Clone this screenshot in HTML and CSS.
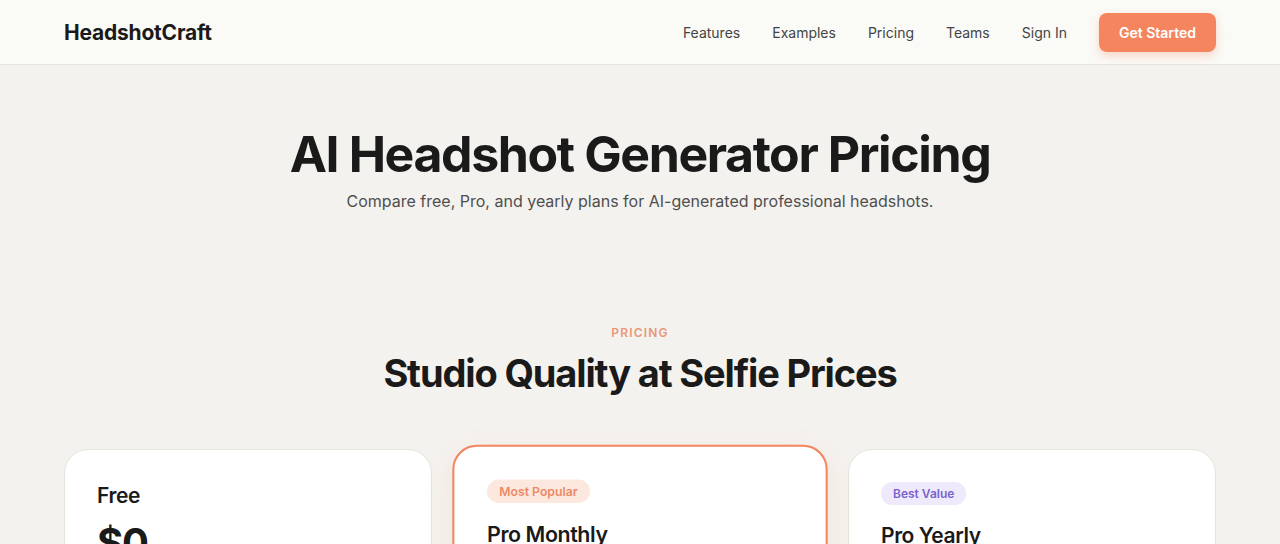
FILE: index.html
```html
<!DOCTYPE html>
<html lang="en">

<head>
    <meta charset="UTF-8">
    <meta name="viewport" content="width=device-width, initial-scale=1.0">
    <title>AI Headshot Generator Pricing - HeadshotCraft</title>
    <link rel="stylesheet" href="styles.css">
</head>

<body>
    <header class="site-header">
        <div class="container nav">
            <a class="logo" href="#">HeadshotCraft</a>
            <nav class="nav-links">
                <a href="#">Features</a>
                <a href="#">Examples</a>
                <a href="#">Pricing</a>
                <a href="#">Teams</a>
                <a href="#">Sign In</a>
                <a class="btn-primary" href="#">Get Started</a>
            </nav>
        </div>
    </header>

    <main>
        <section class="hero">
            <h1>AI Headshot Generator Pricing</h1>
            <p>Compare free, Pro, and yearly plans for AI-generated professional headshots.</p>
        </section>

        <section class="pricing container">
            <div class="section-label">Pricing</div>
            <h2>Studio Quality at Selfie Prices</h2>

            <div class="plans">
                <div class="plan">
                    <h3>Free</h3>
                    <div class="price">$0</div>
                    <p class="plan-note">Try it out with a few sample headshots.</p>
                    <ul>
                        <li>3 AI headshots</li>
                        <li>Standard resolution</li>
                        <li>2 background styles</li>
                    </ul>
                    <a class="plan-btn" href="#">Start Free</a>
                </div>

                <div class="plan featured">
                    <span class="badge badge-popular">Most Popular</span>
                    <h3>Pro Monthly</h3>
                    <div class="price">$19<span>/month</span></div>
                    <p class="plan-note">Everything you need for a polished profile.</p>
                    <ul>
                        <li>100 AI headshots</li>
                        <li>High resolution downloads</li>
                        <li>All background styles</li>
                    </ul>
                    <a class="plan-btn plan-btn-primary" href="#">Go Pro</a>
                </div>

                <div class="plan">
                    <span class="badge badge-value">Best Value</span>
                    <h3>Pro Yearly</h3>
                    <div class="price">$149<span>/year</span></div>
                    <p class="plan-note">Save over 30% with annual billing.</p>
                    <ul>
                        <li>Unlimited AI headshots</li>
                        <li>High resolution downloads</li>
                        <li>Priority processing</li>
                    </ul>
                    <a class="plan-btn" href="#">Choose Yearly</a>
                </div>
            </div>
        </section>
    </main>
</body>

</html>
```

FILE: styles.css
```css
/* General Reset */
* {
    margin: 0;
    padding: 0;
    box-sizing: border-box;
}

:root {
    --accent: #f4855f;
    --accent-soft: #fde8df;
    --purple: #7b62cf;
    --purple-soft: #efeafb;
    --bg: #f4f2ee;
    --header-bg: #fafaf6;
    --text: #1a1a1a;
    --muted: #4f4f4f;
    --border: #e6e3dd;
    --heading-font: "Inter", "Lato", sans-serif;
}

body {
    font-family: "Inter", "Liberation Sans", sans-serif;
    background-color: var(--bg);
    color: var(--text);
}

a {
    text-decoration: none;
    color: inherit;
}

.container {
    max-width: 1152px;
    margin: 0 auto;
}

/* Header */
.site-header {
    background-color: var(--header-bg);
    border-bottom: 1px solid var(--border);
}

.nav {
    height: 64px;
    display: flex;
    align-items: center;
    justify-content: space-between;
}

.logo {
    font-family: var(--heading-font);
    font-weight: 700;
    font-size: 21px;
    letter-spacing: -0.01em;
}

.nav-links {
    display: flex;
    align-items: center;
    gap: 32px;
    font-size: 14px;
    color: #444;
}

.btn-primary {
    background-color: var(--accent);
    color: #fff;
    font-weight: 600;
    padding: 11px 20px;
    border-radius: 8px;
    box-shadow: 0 4px 10px rgba(244, 133, 95, 0.3);
}

/* Hero */
.hero {
    text-align: center;
    padding: 59px 0 0;
}

.hero h1 {
    font-family: var(--heading-font);
    font-size: 50px;
    font-weight: 700;
    letter-spacing: -0.028em;
    line-height: 1.2;
}

.hero p {
    margin-top: 7px;
    font-size: 16px;
    color: var(--muted);
}

/* Pricing */
.pricing {
    padding-top: 114px;
    text-align: center;
}

.section-label {
    font-size: 12px;
    font-weight: 600;
    letter-spacing: 0.1em;
    text-transform: uppercase;
    color: #e9967a;
}

.pricing h2 {
    margin-top: 11px;
    font-family: var(--heading-font);
    font-size: 38px;
    font-weight: 700;
    letter-spacing: -0.03em;
    line-height: 1.2;
}

.plans {
    display: grid;
    grid-template-columns: repeat(3, 1fr);
    gap: 24px;
    margin-top: 52px;
    text-align: left;
}

.plan {
    background-color: #fff;
    border: 1px solid var(--border);
    border-radius: 24px;
    padding: 32px;
    display: flex;
    flex-direction: column;
    align-items: flex-start;
}

.plan.featured {
    border: 2px solid var(--accent);
    transform: scale(1.02);
    box-shadow: 0 10px 30px rgba(244, 133, 95, 0.12);
}

.badge {
    font-size: 12px;
    font-weight: 600;
    padding: 4px 12px;
    border-radius: 999px;
    margin-bottom: 17px;
}

.badge-popular {
    background-color: var(--accent-soft);
    color: #ec8a66;
}

.badge-value {
    background-color: var(--purple-soft);
    color: var(--purple);
}

.plan h3 {
    font-family: var(--heading-font);
    font-size: 21px;
    font-weight: 600;
    letter-spacing: -0.02em;
    line-height: 28px;
}

.price {
    margin-top: 8px;
    font-family: var(--heading-font);
    font-size: 40px;
    font-weight: 700;
    letter-spacing: -0.03em;
}

.price span {
    font-size: 16px;
    font-weight: 500;
    color: var(--muted);
    letter-spacing: 0;
}

.plan-note {
    margin-top: 8px;
    font-size: 15px;
    color: var(--muted);
}

.plan ul {
    list-style: none;
    margin: 24px 0;
    font-size: 15px;
    line-height: 2;
}

.plan-btn {
    align-self: stretch;
    text-align: center;
    padding: 12px 20px;
    border-radius: 10px;
    border: 1px solid var(--border);
    font-weight: 600;
}

.plan-btn-primary {
    background-color: var(--accent);
    border-color: var(--accent);
    color: #fff;
}
```
